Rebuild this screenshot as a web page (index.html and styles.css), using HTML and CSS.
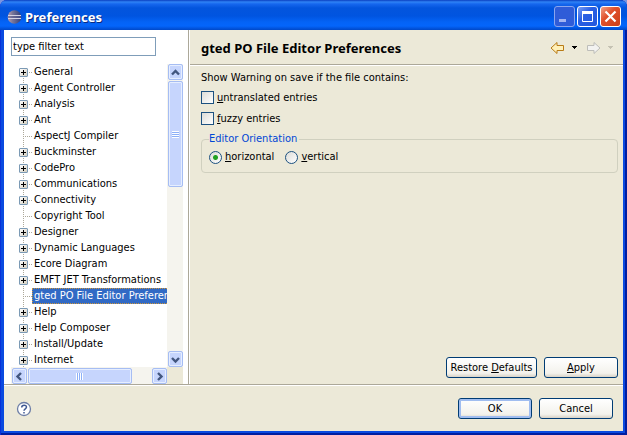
FILE: index.html
```html
<!DOCTYPE html>
<html lang="en">
<head>
<meta charset="utf-8">
<title>Preferences</title>
<link rel="stylesheet" href="styles.css">
</head>
<body>
<div class="window">
  <header class="titlebar">
    <svg class="logo" width="16" height="16" viewBox="0 0 16 16" aria-hidden="true">
      <defs>
        <linearGradient id="orb" x1="0" x2="1" y1="0" y2="0">
          <stop offset="0" stop-color="#bd9fae"/><stop offset=".35" stop-color="#7a7799"/><stop offset="1" stop-color="#2d3d7c"/>
        </linearGradient>
      </defs>
      <circle cx="7.5" cy="8" r="6.8" fill="url(#orb)"/>
      <path d="M1 6.5h13M1 9.5h13" stroke="#d5d3e3"/>
      <path d="M1 8h13" stroke="#595b8d"/>
    </svg>
    <h1 class="caption">Preferences</h1>
    <button class="win-btn win-min" aria-label="Minimize"><svg width="19" height="19" viewBox="0 0 19 19"><path d="M4 12h7v3H4z" fill="#a3b5f1"/></svg></button>
    <button class="win-btn" aria-label="Maximize"><svg width="19" height="19" viewBox="0 0 19 19"><path d="M4.500 5.500h10v9h-10z" fill="none" stroke="#fff"/><path d="M4 4h11v3H4z" fill="#fff"/></svg></button>
    <button class="win-btn win-close" aria-label="Close"><svg width="19" height="19" viewBox="0 0 19 19"><path d="M4.500 4.500l10 10M14.500 4.500l-10 10" stroke="#fff" stroke-width="2.200"/></svg></button>
  </header>
  <div class="client">
    <main class="panes">
      <nav class="sidebar">
        <input class="filter" type="text" value="type filter text" aria-label="Filter">
        <div class="tree-box">
          <ul class="tree">
            <li><button class="plus" aria-label="Expand"></button><span>General</span></li>
            <li><button class="plus" aria-label="Expand"></button><span>Agent Controller</span></li>
            <li><button class="plus" aria-label="Expand"></button><span>Analysis</span></li>
            <li><button class="plus" aria-label="Expand"></button><span>Ant</span></li>
            <li class="leaf"><span>AspectJ Compiler</span></li>
            <li><button class="plus" aria-label="Expand"></button><span>Buckminster</span></li>
            <li><button class="plus" aria-label="Expand"></button><span>CodePro</span></li>
            <li><button class="plus" aria-label="Expand"></button><span>Communications</span></li>
            <li><button class="plus" aria-label="Expand"></button><span>Connectivity</span></li>
            <li class="leaf"><span>Copyright Tool</span></li>
            <li><button class="plus" aria-label="Expand"></button><span>Designer</span></li>
            <li><button class="plus" aria-label="Expand"></button><span>Dynamic Languages</span></li>
            <li><button class="plus" aria-label="Expand"></button><span>Ecore Diagram</span></li>
            <li><button class="plus" aria-label="Expand"></button><span>EMFT JET Transformations</span></li>
            <li class="leaf"><span class="selected">gted PO File Editor Preferences</span></li>
            <li><button class="plus" aria-label="Expand"></button><span>Help</span></li>
            <li><button class="plus" aria-label="Expand"></button><span>Help Composer</span></li>
            <li><button class="plus" aria-label="Expand"></button><span>Install/Update</span></li>
            <li><button class="plus" aria-label="Expand"></button><span>Internet</span></li>
          </ul>
          <div class="scroll scroll-v">
            <button class="arrow" aria-label="Scroll up"><svg width="13" height="13" viewBox="0 0 13 13"><path d="M3 8.500l3.500-3.500L10 8.500" /></svg></button>
            <div class="thumb"><i class="grip"></i></div>
            <button class="arrow" aria-label="Scroll down"><svg width="13" height="13" viewBox="0 0 13 13"><path d="M3 5l3.500 3.500L10 5" /></svg></button>
          </div>
          <div class="scroll scroll-h">
            <button class="arrow" aria-label="Scroll left"><svg width="13" height="13" viewBox="0 0 13 13"><path d="M8 3L4.500 6.500L8 10" /></svg></button>
            <div class="thumb"><i class="grip"></i></div>
            <button class="arrow" aria-label="Scroll right"><svg width="13" height="13" viewBox="0 0 13 13"><path d="M5 3l3.500 3.500L5 10" /></svg></button>
          </div>
          <div class="corner"></div>
        </div>
      </nav>
      <section class="page">
        <div class="page-head">
          <h2>gted PO File Editor Preferences</h2>
          <button class="nav-btn" aria-label="Back"><svg width="28" height="14" viewBox="0 0 28 14"><path d="M1 7l6-5.500v3h6.500v5H7v3z" fill="#fff0b8" stroke="#b87b16"/><path d="M22 5h5v1h-1v1h-1v1h-1v-1h-1v-1h-1z" fill="#000"/></svg></button>
          <button class="nav-btn" aria-label="Forward" disabled><svg width="28" height="14" viewBox="0 0 28 14"><path d="M14 7L8 1.500v3H1.500v5H8v3z" fill="#f2f2f0" stroke="#bdbdb9"/><path d="M22 5h5v1h-1v1h-1v1h-1v-1h-1v-1h-1z" fill="#c5c2b3"/></svg></button>
        </div>
        <form class="page-body">
          <p>Show Warning on save if the file contains:</p>
          <label class="choice check"><input type="checkbox"><span><u>u</u>ntranslated entries</span></label>
          <label class="choice check"><input type="checkbox"><span><u>f</u>uzzy entries</span></label>
          <fieldset>
            <legend>Editor Orientation</legend>
            <label class="choice"><input type="radio" name="orient" checked><span><u>h</u>orizontal</span></label>
            <label class="choice"><input type="radio" name="orient"><span><u>v</u>ertical</span></label>
          </fieldset>
          <div class="actions">
            <button type="button" class="btn wide">Restore <u>D</u>efaults</button>
            <button type="button" class="btn"><u>A</u>pply</button>
          </div>
        </form>
      </section>
    </main>
    <footer class="footer">
      <button class="help" aria-label="Help"><svg width="16" height="16" viewBox="0 0 16 16"><circle cx="8" cy="8" r="6.500" fill="#fff" stroke="#6d7ea6" stroke-width="1.300"/><path d="M5.700 6.500c0-3 4.800-3 4.800-.4C10.500 8 8 7.800 8 9.800M8 11v1.500" fill="none" stroke="#415a93" stroke-width="1.500"/></svg></button>
      <button class="btn default">OK</button>
      <button class="btn">Cancel</button>
    </footer>
  </div>
</div>
</body>
</html>
```
FILE: styles.css
```css
* { box-sizing: border-box; }
body {
  margin: 0;
  background: #7b95e0;
  color: #000;
  font: 11px/16px "DejaVu Sans Condensed", "DejaVu Sans", sans-serif;
}
button, input { font: inherit; color: inherit; }
button { padding: 0; }
svg { display: block; }
h1, h2, p, ul { margin: 0; padding: 0; }

.window {
  display: flex;
  flex-direction: column;
  height: 100vh;
  padding: 0 4px 4px;
  border-radius: 7px 7px 0 0;
  background: #0a4ae0;
  box-shadow: inset 1px 0 #0831d9, inset -2px 0 #001ea0, inset 0 -2px #001ea0;
}
.titlebar {
  display: flex;
  flex: none;
  align-items: center;
  gap: 2px;
  height: 30px;
  margin: 0 -4px;
  padding: 3px 6px 0 7px;
  border-radius: 7px 7px 0 0;
  background: linear-gradient(#0a3fc0 0, #2f83f5 2px, #1667ee 4px, #0355dd 8px, #0054e0 16px, #0463f6 22px, #0465fb 26px, #0048c8 30px);
}
.caption {
  flex: 1;
  color: #fff;
  font: bold 13px/16px "Noto Sans", "Open Sans", sans-serif;
  text-shadow: 1px 1px #0a2a80;
}
.win-btn {
  width: 21px;
  height: 21px;
  border: 1px solid #fff;
  border-radius: 3px;
  background: linear-gradient(135deg, #7a9ff5, #2a5fe3 40%, #2257dd);
}
.win-min { border-color: #8aa5ee; background: #2f5cd8; }
.win-close { background: linear-gradient(135deg, #f0a088, #e0502c 40%, #cc3f18); }

.client {
  display: flex;
  flex: 1;
  flex-direction: column;
  min-height: 0;
  background: #ece9d8;
}
.panes { display: flex; flex: 1; min-height: 0; }
.sidebar {
  display: flex;
  flex: none;
  flex-direction: column;
  gap: 8px;
  width: 185px;
  padding: 7px 5px 0 7px;
  border-right: 1px solid #aca899;
  background: #fff;
}
.filter {
  width: 145px;
  height: 19px;
  padding: 0 1px;
  border: 1px solid #7f9db9;
  background: #fff;
}
.tree-box {
  display: grid;
  flex: 1;
  grid-template: minmax(0, 1fr) 17px / minmax(0, 1fr) 16px;
  min-height: 0;
}
.tree { overflow: hidden; list-style: none; }
.tree li {
  display: flex;
  align-items: center;
  gap: 4px;
  height: 16px;
  padding-left: 8px;
  white-space: nowrap;
  background:
    repeating-linear-gradient(#aca899 0 1px, transparent 1px 2px) 12px 0 / 1px 16px no-repeat,
    repeating-linear-gradient(90deg, #aca899 0 1px, transparent 1px 2px) 12px 8px / 9px 1px no-repeat;
}
.tree li:first-child { background-position: 12px 8px, 12px 8px; }
.tree li.leaf { padding-left: 21px; }
.tree span { padding: 0 2px; }
.tree .selected {
  line-height: 14px;
  padding: 0 1px;
  border: 1px dotted #ce953a;
  background: #316ac5;
  color: #fff;
}
.plus {
  flex: none;
  width: 9px;
  height: 9px;
  border: 1px solid #7b9ab5;
  border-radius: 1px;
  background:
    linear-gradient(#000, #000) center / 5px 1px no-repeat,
    linear-gradient(#000, #000) center / 1px 5px no-repeat,
    linear-gradient(135deg, #fff, #d2cdbe);
}
.scroll { display: flex; gap: 1px; background: #f5f4ee; }
.scroll-v { flex-direction: column; padding-left: 1px; }
.scroll-h { padding: 1px 0 0 1px; }
.corner { background: #ece9d8; }
.scroll .arrow,
.thumb {
  display: flex;
  align-items: center;
  justify-content: center;
  border: 1px solid #a6bdf3;
  border-radius: 2px;
  background: #c6d5fd;
  box-shadow: inset 0 0 0 1px #e6eeff;
}
.arrow { flex: none; width: 15px; height: 16px; }
.arrow svg { fill: none; stroke: #42567f; stroke-width: 2.4; }
.thumb { flex: none; }
.scroll-v .thumb { height: 35%; }
.scroll-h .thumb { width: 67%; }
.scroll .arrow:last-child { margin: auto 0 0 auto; }
.grip {
  width: 7px;
  height: 7px;
  background: repeating-linear-gradient(#fff 0 1px, #8cb0f8 1px 2px);
}
.scroll-h .grip { background: repeating-linear-gradient(90deg, #fff 0 1px, #8cb0f8 1px 2px); }

.page {
  display: flex;
  flex: 1;
  flex-direction: column;
  border-left: 1px solid #fff;
}
.page-head {
  display: flex;
  align-items: center;
  gap: 8px;
  height: 36px;
  padding: 0 9px 0 11px;
  border-bottom: 1px solid #fff;
  box-shadow: inset 0 -1px #aca899;
}
.page-head h2 {
  flex: 1;
  font: bold 13px/16px "Noto Sans", "Open Sans", sans-serif;
}
.nav-btn, .help { border: 0; background: none; }
.page-body {
  display: flex;
  flex: 1;
  flex-direction: column;
  padding: 4px 5px 6px 11px;
}
.choice { display: flex; align-items: center; gap: 3px; }
.check { height: 21px; }
.page-body p { height: 17px; }
.choice input {
  appearance: none;
  flex: none;
  width: 13px;
  height: 13px;
  margin: 0;
  border: 1px solid #1c5180;
  background: linear-gradient(135deg, #dcdcd7, #fff);
}
.choice input[type="radio"] { border-radius: 50%; }
.choice input[type="radio"]:checked {
  background: radial-gradient(circle, #21a121 0 2px, transparent 3px), linear-gradient(135deg, #dcdcd7, #fff);
}
fieldset {
  display: flex;
  gap: 11px;
  margin: 2px 0 0;
  padding: 2px 7px 7px;
  border: 1px solid #d0d0bf;
  border-radius: 4px;
}
legend { padding: 0 2px 0 0; color: #0046d5; }
.actions { display: flex; gap: 7px; justify-content: flex-end; margin-top: auto; }
.btn {
  width: 74px;
  height: 21px;
  border: 1px solid #003c74;
  border-radius: 3px;
  background: linear-gradient(#fff, #f3f2ec 80%, #d8d2c6);
}
.wide { width: 91px; }
.default { box-shadow: inset 0 0 0 2px #a0bdf0; }
.footer {
  display: flex;
  flex: none;
  align-items: center;
  gap: 7px;
  height: 47px;
  padding: 1px 10px 0 12px;
  border-top: 1px solid #aca899;
  box-shadow: inset 0 1px #fff;
}
.help { margin-right: auto; }
```
